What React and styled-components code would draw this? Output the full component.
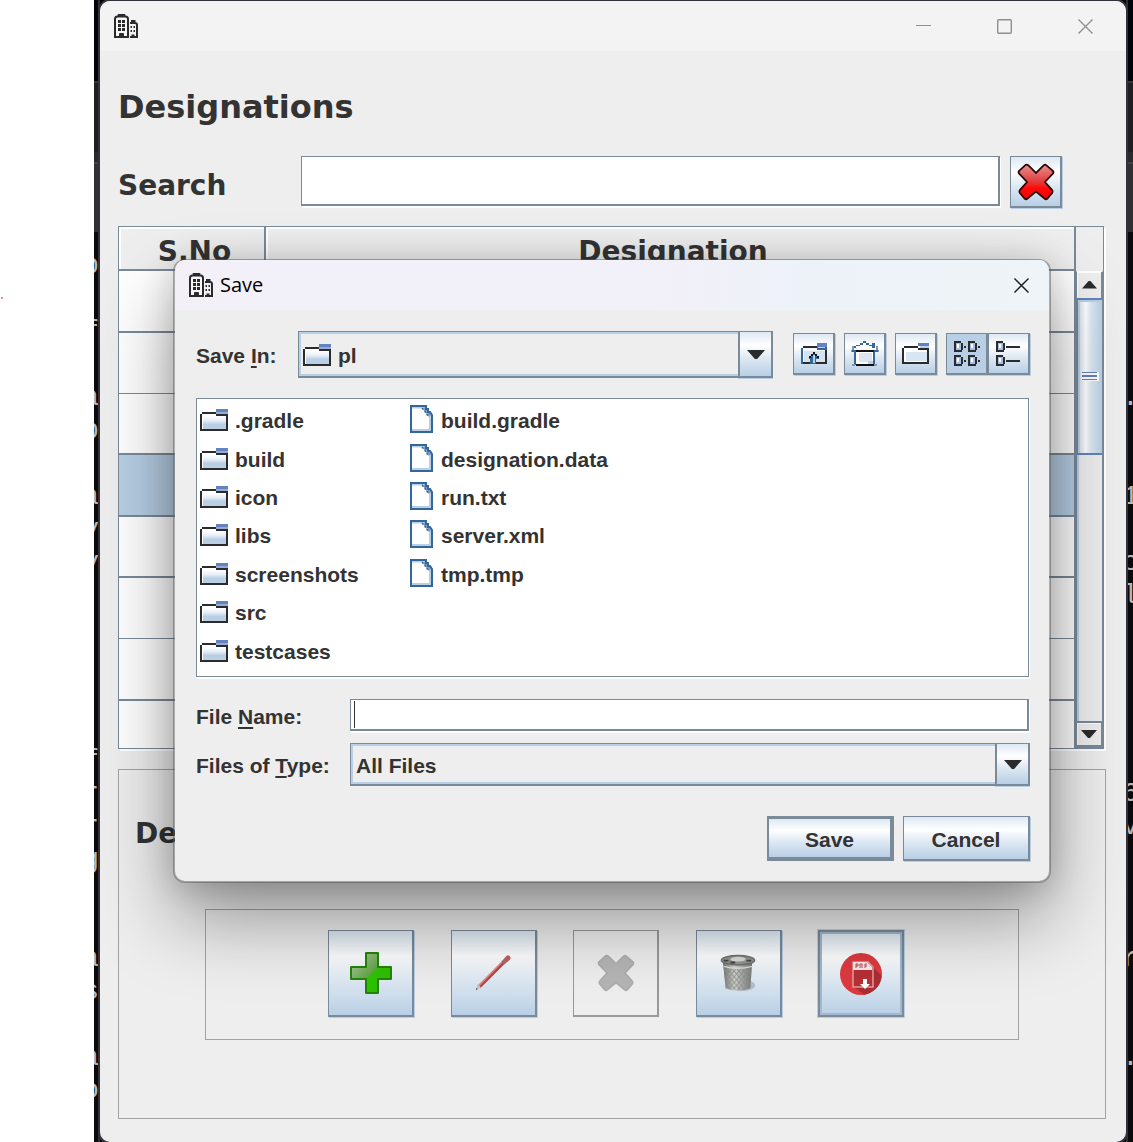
import React from "react";
import styled, { createGlobalStyle, css } from "styled-components";

const steel = "#7a8a99";
const sky = "#b8cfe5";
const ink = "#333333";
const metal = "linear-gradient(180deg, #dde8f3 0%, #ffffff 30%, #dde8f3 60%, #b8cfe5 100%)";

const GlobalStyle = createGlobalStyle`
  * { box-sizing: border-box; }
  body { margin: 0; background: #ffffff; color: ${ink}; }
  button, input, select { font: inherit; color: inherit; margin: 0; border-radius: 0; }
  button { padding: 0; }
  button:focus, input:focus, select:focus { outline: none; }
`;

/* ---------- desktop ---------- */

const Page = styled.div`
  display: grid;
  grid-template-columns: 94px minmax(0, 1fr);
  min-height: 100vh;
`;

const Paper = styled.div`
  background: #ffffff;
  padding: 297px 0 0 1px;
`;

const Speck = styled.div`
  width: 2px;
  height: 2px;
  background: #f08a8a;
`;

const Desktop = styled.div`
  display: grid;
  grid-template-columns: 6px minmax(0, 1fr) 7px;
  background: linear-gradient(
    180deg,
    #01030a 0 81px, #363636 81px 83px, #1f1f1f 83px 152px, #2a2a2a 152px 162px,
    #434343 162px 164px, #303030 164px 232px, #0a0a0a 232px
  );
`;

const Gutter = styled.div`
  display: flex;
  flex-direction: column;
  align-items: ${(p) => (p.$side === "left" ? "flex-end" : "flex-start")};
  min-width: 0;
  overflow: hidden;
  padding: 249px 1px 0 0;
  text-indent: ${(p) => (p.$side === "left" ? "0" : "-4px")};
  background: linear-gradient(#303030, #303030) ${(p) => (p.$side === "left" ? "right" : "left")} / 2px 100% no-repeat;
  font: 28px/33px "Liberation Mono", monospace;
  color: #b8b8b8;
`;

const CodeLine = styled.span`
  height: 33px;
  flex: none;
  white-space: pre;
`;

/* ---------- main window ---------- */

const Window = styled.main`
  position: relative;
  display: flex;
  flex-direction: column;
  margin-top: 1px;
  border-radius: 10px;
  background: #eeeeee;
  box-shadow: 0 0 0 2px #34313a;
  font-family: "DejaVu Sans", Verdana, sans-serif;
  font-weight: 700;
  overflow: hidden;
`;

const TitleBar = styled.header`
  display: flex;
  align-items: center;
  height: 50px;
  padding-left: 14px;
  background: #f3f3f3;
`;

const CaptionButtons = styled.div`
  display: flex;
  margin-left: auto;
`;

const CaptionButton = styled.button`
  display: grid;
  place-items: center;
  width: ${(p) => (p.$narrow ? "56px" : "81px")};
  height: 50px;
  border: 0;
  background: transparent;
  color: ${(p) => (p.$narrow ? "#1b1b1b" : "#8f8f8f")};
`;

const Content = styled.div`
  display: flex;
  flex-direction: column;
  flex: 1;
  padding: 36px 20px 23px 18px;
`;

const Heading = styled.h1`
  margin: 0;
  font-size: 32px;
  line-height: 40px;
`;

const SearchRow = styled.div`
  display: flex;
  align-items: center;
  gap: 10px;
  margin-top: 29px;
  padding-right: 44px;
`;

const BigLabel = styled.label`
  font-size: 28px;
  line-height: 34px;
`;

const SearchLabel = styled(BigLabel)`
  width: 173px;
  padding-top: 8px;
`;

const field = css`
  min-width: 0;
  background-color: #ffffff;
  border: solid ${steel};
  border-width: 1px 2px 2px 1px;
  box-shadow: 1px 2px 0 #ffffff;
`;

const SearchInput = styled.input`
  ${field}
  flex: 1;
  height: 50px;
  margin-bottom: 2px;
  padding: 0 8px;
`;

const MetalButton = styled.button`
  display: grid;
  place-items: center;
  flex: none;
  width: ${(p) => p.$w}px;
  height: ${(p) => p.$h}px;
  border: solid ${(p) => (p.disabled ? "#999999" : steel)};
  border-width: ${(p) => (p.$default ? "3px 4px 4px 2px" : "1px 2px 2px 1px")};
  background: ${(p) => (p.disabled ? "transparent" : p.$pressed ? sky : metal)};
  box-shadow: ${(p) => (p.$default || p.disabled ? "none" : `1px 1px 0 ${sky}`)};
  ${(p) =>
    p.$focused &&
    css`
      border-width: 2px;
      box-shadow: inset 0 0 0 2px #a3b8cc, 0 0 0 1px ${sky};
    `}
`;

/* ---------- table ---------- */

const ScrollPane = styled.section`
  display: grid;
  grid-template-columns: minmax(0, 1fr) 27px;
  height: 523px;
  margin-top: 18px;
  margin-right: 2px;
  border: 1px solid ${steel};
  box-shadow: 2px 2px 0 #ffffff;
`;

const Viewport = styled.div`
  overflow: hidden;
  border-right: 1px solid ${steel};
`;

const Table = styled.table`
  width: 100%;
  border-collapse: separate;
  border-spacing: 0;
  table-layout: fixed;
  font-size: 28px;
  line-height: 34px;

  th {
    height: 44px;
    padding: 8px 0 0 6px;
    border: solid ${steel};
    border-width: 0 2px 2px 0;
    box-shadow: inset 2px 2px 0 #ffffff;
    vertical-align: top;
  }
  th:last-child { border-right-width: 1px; }
  th:first-child { width: 147px; }
`;

const Row = styled.tr`
  height: 61px;
  background: ${(p) => (p.$selected ? sky : "#ffffff")};
  &:nth-child(3n + 1) { height: 62px; }
  td {
    padding: 0;
    border-bottom: 2px solid ${steel};
  }
  td:last-child { border-right: 1px solid ${steel}; }
  &:nth-child(4n + 2) td { border-bottom-width: 1px; }
`;

const ScrollBar = styled.div`
  display: flex;
  flex-direction: column;
  margin-top: 44px;
  border: solid ${steel};
  border-width: 0 1px 1px;
  border-top: 1px solid #ffffff;
`;

const ArrowButton = styled.button`
  display: grid;
  place-items: center;
  height: 26px;
  border: 0;
  border-top: ${(p) => (p.$down ? `2px solid ${steel}` : "0")};
  border-bottom: ${(p) => (p.$down ? `2px solid ${steel}` : "0")};
  border-right: 1px solid ${steel};
  background: #eeeeee;
  box-shadow: inset 1px 1px 0 #ffffff;
`;

const Track = styled.div`
  flex: 1;
  border-left: 2px solid ${sky};
`;

const Thumb = styled.div`
  display: grid;
  place-items: center;
  height: 157px;
  margin-left: -2px;
  border: solid #6382bf;
  border-width: 2px 0 2px 1px;
  background: linear-gradient(90deg, #cfdeec 0%, #ffffff 32%, #dde8f3 55%, #b8cfe5 100%);
  box-shadow: inset 2px 2px 0 ${sky};
`;

const Panel = styled.section`
  flex: 1;
  margin-top: 20px;
  padding: 47px 86px 78px;
  border: 1px solid #a3a3a3;
`;

const PanelLabel = styled.div`
  margin-left: -70px;
  font-size: 28px;
  line-height: 34px;
`;

const ActionBar = styled.div`
  display: flex;
  justify-content: space-between;
  margin-top: 58px;
  padding: 20px 114px 22px 122px;
  border: 1px solid #a3a3a3;
`;

/* ---------- dialog ---------- */

const Dialog = styled.div`
  position: absolute;
  top: 258px;
  left: 73px;
  right: 75px;
  border: solid rgba(90, 90, 90, 0.5);
  border-width: 1px 2px 2px;
  border-radius: 12px;
  background: #eeeeee;
  background-clip: padding-box;
  box-shadow: 0 36px 76px rgba(0, 0, 0, 0.38), 0 2px 32px rgba(0, 0, 0, 0.16);
  font: 700 21px/26px "Liberation Sans", Arial, sans-serif;
  overflow: hidden;
`;

const DialogTitle = styled.header`
  display: flex;
  align-items: center;
  gap: 7px;
  height: 50px;
  padding-left: 14px;
  background: linear-gradient(90deg, #f3f0f8 0%, #f2f0f8 55%, #edf2f9 72%, #eef4f7 100%);
  color: #000000;
  font: 400 20px/28px "Open Sans", "Noto Sans", sans-serif;

  button { margin-left: auto; }
`;

const DialogBody = styled.form`
  padding: 21px 19px 20px 21px;
`;

const FormRow = styled.div`
  display: flex;
  align-items: center;
  margin-top: ${(p) => p.$gap || 0}px;
`;

const FormLabel = styled.label`
  flex: none;
  width: ${(p) => p.$w}px;
  padding-top: 3px;
  white-space: pre;
  u {
    text-decoration-thickness: 2px;
    text-underline-offset: 3px;
    text-decoration-skip-ink: none;
  }
`;

const Combo = styled.div`
  position: relative;
  flex: 1;
  min-width: 0;

  > svg {
    position: absolute;
    left: 5px;
    top: 13px;
  }
`;

const Select = styled.select`
  display: block;
  appearance: none;
  width: 100%;
  height: ${(p) => p.$h}px;
  padding: 4px 40px 0 ${(p) => (p.$icon ? 39 : 5)}px;
  background: #eeeeee;
  border: solid ${steel};
  border-width: 1px 2px 2px 1px;
  box-shadow: inset 0 0 0 2px ${sky};
`;

const ComboArrow = styled.span`
  position: absolute;
  top: 0;
  right: 0;
  bottom: 0;
  display: grid;
  place-items: center;
  width: 35px;
  border: solid ${steel};
  border-width: 1px 2px 2px;
  background: ${metal};
  box-shadow: 0 1px 0 ${sky};
  pointer-events: none;
`;

const Tools = styled.div`
  display: flex;
  gap: 9px;
  margin: 0 0 2px 20px;
`;

const ViewToggle = styled.div`
  display: flex;
`;

const FileList = styled.ul`
  display: grid;
  grid-auto-flow: column;
  grid-template-rows: repeat(7, 1fr);
  grid-template-columns: 210px 1fr;
  height: 279px;
  margin: 20px 1px 0 0;
  padding: 3px 3px 5px;
  list-style: none;
  background: #ffffff;
  border: 1px solid ${steel};
  box-shadow: 1px 2px 0 #ffffff;
`;

const FileItem = styled.li`
  display: flex;
  align-items: center;
  gap: ${(p) => (p.$folder ? 7 : 8)}px;
  svg { flex: none; margin-bottom: ${(p) => (p.$folder ? 2 : 4)}px; }
`;

const NameInput = styled.input`
  ${field}
  flex: 1;
  height: 32px;
  margin-right: 1px;
  padding: 0 5px;
  background-image: linear-gradient(${ink}, ${ink});
  background-size: 1px 27px;
  background-position: 3px 1px;
  background-repeat: no-repeat;
  caret-color: transparent;
`;

const DialogButtons = styled.div`
  display: flex;
  justify-content: flex-end;
  gap: 9px;
  margin-top: 30px;

  button { padding-top: 4px; }
`;

/* ---------- icons ---------- */

const BuildingIcon = () => (
  <svg width="24" height="24" viewBox="0 0 24 24" fill="none" aria-hidden="true">
    <path d="M4.500 1h6" stroke="#2b2b2b" strokeWidth="2" strokeLinecap="round" />
    <path d="M1 23V5Q1 2.500 3.500 2.500h8Q14 2.500 14 5v18z" stroke="#2b2b2b" strokeWidth="2" fill="#f7f7f7" />
    <path d="M17 7h4.500M16 9h5q2 0 2 2v12h-7" stroke="#2b2b2b" strokeWidth="2" />
    <path d="M4 6h3v3H4zm4 0h3v3H8zM4 10h3v3H4zm4 0h3v3H8zM4 14h3v3H4zm4 0h3v3H8zM5 24v-4q0-1 1-1h3q1 0 1 1v4z" fill="#2b2b2b" />
    <path d="M16.500 12H18v2h-1.500zm3 0H21v2h-1.500zm-3 4H18v2h-1.500zm3 0H21v2h-1.500zM17.500 24v-3.500h3V24z" fill="#2b2b2b" />
  </svg>
);

const MinimizeIcon = () => (
  <svg width="16" height="16" stroke="currentColor" fill="none" aria-hidden="true"><path d="M0 7.500h15" /></svg>
);
const MaximizeIcon = () => (
  <svg width="15" height="15" stroke="currentColor" fill="none" strokeWidth="1.400" aria-hidden="true">
    <rect x=".7" y=".7" width="13.600" height="13.600" rx="1" />
  </svg>
);
const CloseIcon = () => (
  <svg width="15" height="15" stroke="currentColor" fill="none" strokeWidth="1.400" aria-hidden="true">
    <path d="M.5.500l14 14M14.500.500l-14 14" />
  </svg>
);

const Triangle = ({ up, size = 16 }) => (
  <svg width={size} height={size / 2} viewBox="0 0 16 8" aria-hidden="true">
    <path d={up ? "M0 8L7 0h2l7 8z" : "M0 0h16L9 8H7z"} fill="#2b2b2b" />
  </svg>
);

const FolderIcon = () => (
  <svg width="28" height="22" shapeRendering="crispEdges" aria-hidden="true">
    <defs>
      <linearGradient id="folderFill" x1="0" y1="0" x2="0" y2="1">
        <stop offset="0" stopColor="#ffffff" />
        <stop offset=".35" stopColor="#e6eef7" />
        <stop offset=".65" stopColor="#b8cfe5" />
      </linearGradient>
    </defs>
    <path d="M2 5h24v15H2z" fill="#ffffff" />
    <path d="M3 7h23v13H3z" fill="url(#folderFill)" />
    <path d="M0 5h2v16H0zM2 3h14v2H2zM16 5h12v2H16zM26 7h2v15h-2zM0 20h28v2H0z" fill="#2b2b2b" />
    <path d="M16 0h12v3H16z" fill="#6382bf" />
    <path d="M16 3h12v2H16z" fill="#94acd6" />
  </svg>
);

const FileIcon = () => (
  <svg width="23" height="28" aria-hidden="true">
    <path d="M1 1h14.500L22 9.500V27H1z" fill="#ffffff" />
    <path d="M2 2.500h13M20 10v15.500M2 25h19" stroke="#b8cfe5" strokeWidth="2" fill="none" />
    <path d="M14 3l6 8" stroke="#7fa0c4" strokeWidth="3" />
    <path d="M1 1h15v3h2v3h2l2 3v17H1z" stroke="#336699" strokeWidth="2" fill="none" />
    <path d="M12 3l3 3 1 3 3 2" stroke="#336699" strokeWidth="1.500" strokeDasharray="2 2" fill="none" />
  </svg>
);

const UpFolderIcon = () => (
  <svg width="26" height="21" shapeRendering="crispEdges" aria-hidden="true">
    <path d="M2 5h22v14H2z" fill="#f4f8fc" />
    <path d="M3 8h21v11H3z" fill="#d5e3f0" />
    <path d="M2 3h14v2H2zM24 6h2v15h-2zM2 19h22v2H2z" fill="#2b2b2b" />
    <path d="M0 5h2v16H0zM16 4h10v3H16z" fill="#336699" />
    <path d="M16 0h10v4H16z" fill="#6382bf" />
    <path d="M17 4h7v1h-7z" fill="#b8cfe5" />
    <path d="M12 11h3v2h3v3h-3v5h-3v-5h0v5h-3v-5H8v-3h4z" fill="#336699" />
    <path d="M12 12h2v8h-2z" fill="#b8cfe5" />
    <path d="M12 9h2v2h-2zM10 11h2v2h-2zM14 11h2v2h-2zM8 13h2v2H8zM16 13h2v2h-2z" fill="#111111" />
  </svg>
);

const HomeIcon = () => (
  <svg width="28" height="25" shapeRendering="crispEdges" aria-hidden="true">
    <path d="M12 2h4l8 7H4zM5 10h18v13H5z" fill="#ffffff" />
    <path d="M8 12h13v9H8z" fill="#dbe5f1" />
    <path d="M17 20h5v3h-5z" fill="#b8cfe5" />
    <path d="M12 0h3v2h-3zM9 2h3v2H9zM15 2h3v2h-3zM5 4h4v1H5zM18 4h3V2h3v5h-3V5h-3zM3 5h2v2H3zM1 9h4v2H1zM23 9h4v2h-4zM3 10h2v14H3zM22 10h2v14h-2z" fill="#336699" />
    <path d="M1 5h2v4H1zM25 5h2v4h-2zM0 9h1v2H0zM27 9h1v2h-1zM1 23h3v2H1zM23 23h3v2h-3z" fill="#8596a8" />
    <path d="M5 9h18v2H5zM5 23h18v2H5z" fill="#111111" />
  </svg>
);

const NewFolderIcon = () => (
  <svg width="27" height="21" shapeRendering="crispEdges" aria-hidden="true">
    <path d="M2 5h23v14H2z" fill="#ffffff" />
    <path d="M4 9h21v9H4z" fill="#d8e5f2" />
    <path d="M0 5h2v16H0zM2 3h14v2H2zM16 5h11v2H16zM25 7h2v14h-2zM0 19h27v2H0z" fill="#2b2b2b" />
    <path d="M16 0h11v3H16z" fill="#6382bf" />
    <path d="M18 3h9v2h-9z" fill="#b8cfe5" />
  </svg>
);

const MiniFile = ({ x, y }) => (
  <g transform={`translate(${x} ${y})`}>
    <path d="M2 2h5v7H2z" fill="#a3c0e4" />
    <path d="M3 3h2v4H3z" fill="#ffffff" />
    <path d="M0 0h7v2H0zM0 2h2v8H0zM7 2h2v7H7zM0 9h8v2H0z" fill="#2b2b2b" />
  </g>
);

const GridViewIcon = () => (
  <svg width="26" height="25" shapeRendering="crispEdges" aria-hidden="true">
    <MiniFile x={0} y={0} /><MiniFile x={14} y={0} /><MiniFile x={0} y={14} /><MiniFile x={14} y={14} />
    <path d="M10 5h2v2h-2zM24 5h2v2h-2zM10 19h2v2h-2zM24 19h2v2h-2z" fill="#2b2b2b" />
  </svg>
);

const DetailsViewIcon = () => (
  <svg width="25" height="25" shapeRendering="crispEdges" aria-hidden="true">
    <MiniFile x={0} y={0} /><MiniFile x={0} y={14} />
    <path d="M10 5h14v2H10zM10 19h14v2H10z" fill="#2b2b2b" />
  </svg>
);

const CrossIcon = ({ muted }) => (
  <svg width="38" height="38" viewBox="0 0 40 40" aria-hidden="true">
    <defs>
      <linearGradient id="crossRed" x1="0" y1="0" x2="0" y2="1">
        <stop offset="0" stopColor="#e89090" />
        <stop offset=".5" stopColor="#e23a3a" />
        <stop offset=".68" stopColor="#ff0808" />
        <stop offset="1" stopColor="#f00000" />
      </linearGradient>
    </defs>
    <path
      d="M9 2Q10.500 1 12 2.500L20 10.500 28 2.500Q29.500 1 31 2.500L38 8.500Q39 10 37.500 11.500L29.500 20 37 28.500Q38 30 37 31.500L32 37.500Q30.500 39 29 37.500L20 30 11 37.500Q9.500 39 8 37.500L3 31.500Q2 30 3 28.500L10.500 20 2.500 11.500Q1 10 2 8.500z"
      fill={muted ? "#b5b5b5" : "url(#crossRed)"}
      stroke={muted ? "#adadad" : "#2a0505"}
      strokeWidth="1.800"
    />
  </svg>
);

const PlusIcon = () => (
  <svg width="42" height="42" viewBox="0 0 42 42" aria-hidden="true">
    <defs>
      <linearGradient id="plusGloss" x1="0" y1="0" x2="1" y2="1">
        <stop offset="0" stopColor="#bcd0b0" />
        <stop offset=".5" stopColor="#62a648" />
        <stop offset=".54" stopColor="#30c400" />
        <stop offset="1" stopColor="#2cb800" />
      </linearGradient>
    </defs>
    <path d="M16 1h12v14h13v12H28v14H16V27H1V15h15z" fill="url(#plusGloss)" stroke="#258308" strokeWidth="2" strokeLinejoin="round" />
  </svg>
);

const PencilIcon = () => (
  <svg width="36" height="36" viewBox="0 0 36 36" aria-hidden="true">
    <path d="M4 32L32 4" stroke="#b8443e" strokeWidth="3.600" />
    <path d="M3.500 31L30 4" stroke="#e08a86" strokeWidth="1.600" />
    <path d="M28 8l3-3" stroke="#7c7c84" strokeWidth="4" />
    <path d="M31.500 4.500l1.500-1.500" stroke="#c5605c" strokeWidth="5" strokeLinecap="round" />
    <path d="M2.500 29l3.500 3.500L1 35z" fill="#c9c5c2" />
    <path d="M1 33l2 1-2 1z" fill="#555555" />
  </svg>
);

const TrashIcon = () => (
  <svg width="38" height="38" viewBox="0 0 38 40" aria-hidden="true">
    <defs>
      <linearGradient id="binBody" x1="0" y1="0" x2="1" y2="0">
        <stop offset="0" stopColor="#6b6d6a" />
        <stop offset=".4" stopColor="#d0d3ce" />
        <stop offset="1" stopColor="#707370" />
      </linearGradient>
      <pattern id="binMesh" width="5" height="6" patternUnits="userSpaceOnUse">
        <path d="M0 0l5 6M5 0L0 6" stroke="#8b8e8a" strokeWidth="1" />
      </pattern>
    </defs>
    <ellipse cx="23" cy="33" rx="14" ry="6" fill="#8593a3" opacity=".45" />
    <path d="M3 8l3 28q12 6 26 0l2-28z" fill="url(#binBody)" />
    <path d="M4 15l2 20q12 6 26 0l1-20z" fill="url(#binMesh)" />
    <path d="M4 13q14 4 30 0" stroke="#dcdeda" strokeWidth="1.500" fill="none" />
    <ellipse cx="19" cy="6.500" rx="17.500" ry="5" fill="#8f928e" stroke="#6e706d" strokeWidth="1.500" />
    <ellipse cx="19" cy="5.500" rx="8" ry="2.500" fill="#d5d7d3" />
    <path d="M4 7h5M28 7h5M11 9h5" stroke="#444644" strokeWidth="2" />
  </svg>
);

const PdfIcon = () => (
  <svg width="42" height="42" viewBox="0 0 42 42" aria-hidden="true">
    <circle cx="21" cy="21" r="21" fill="#dc3a40" />
    <path d="M33 14l8.500 9Q40 38 24 41.800L13 33z" fill="#aa2d32" />
    <path d="M13 9h15l5 5v20H13z" fill="#b53035" stroke="#e99a9d" strokeWidth="1.500" />
    <path d="M13 9h14l5 5v3H13z" fill="#f8e9ea" />
    <path d="M16 15v-4h2v2h-2M20 11v4M20 11h2v4M25 15v-4h2M25 13h2" stroke="#b84a50" fill="none" />
    <path d="M23 26h4v5h3l-5 5-5-5h3z" fill="#ffffff" />
  </svg>
);

/* ---------- data ---------- */

const leftCode = ["p", "", "f", "", "a", "b", "", "a", "y", "y", "", "", "", "", "", "f", "r", "r", "g", "", "", "a", "s", "", "a", "o"];
const rightCode = ["", "", "", "", ".", "", "", "1", "", "c", "l", "", "", "", "", "", "6", "v", "", "", "", "r", "", "", "."];
const folders = [".gradle", "build", "icon", "libs", "screenshots", "src", "testcases"];
const files = ["build.gradle", "designation.data", "run.txt", "server.xml", "tmp.tmp"];
const rows = [1, 2, 3, 4, 5, 6, 7, 8];

const CodeGutter = ({ side, lines }) => (
  <Gutter $side={side} aria-hidden="true">
    {lines.map((text, i) => <CodeLine key={i}>{text}</CodeLine>)}
  </Gutter>
);

const SaveDialog = () => (
  <Dialog role="dialog" aria-label="Save">
    <DialogTitle>
      <BuildingIcon />
      Save
      <CaptionButton $narrow aria-label="Close dialog"><CloseIcon /></CaptionButton>
    </DialogTitle>
    <DialogBody onSubmit={(e) => e.preventDefault()}>
      <FormRow>
        <FormLabel $w={102} htmlFor="folder">Save <u>I</u>n:</FormLabel>
        <Combo>
          <Select id="folder" $h={47} $icon><option>pl</option></Select>
          <FolderIcon />
          <ComboArrow><Triangle size={18} /></ComboArrow>
        </Combo>
        <Tools>
          <MetalButton type="button" $w={42} $h={42} aria-label="Up one level"><UpFolderIcon /></MetalButton>
          <MetalButton type="button" $w={42} $h={42} aria-label="Home"><HomeIcon /></MetalButton>
          <MetalButton type="button" $w={42} $h={42} aria-label="Create new folder"><NewFolderIcon /></MetalButton>
          <ViewToggle>
            <MetalButton type="button" $w={42} $h={42} $pressed aria-pressed="true" aria-label="List"><GridViewIcon /></MetalButton>
            <MetalButton type="button" $w={42} $h={42} aria-pressed="false" aria-label="Details"><DetailsViewIcon /></MetalButton>
          </ViewToggle>
        </Tools>
      </FormRow>
      <FileList>
        {folders.map((name) => <FileItem key={name} $folder><FolderIcon />{name}</FileItem>)}
        {files.map((name) => <FileItem key={name}><FileIcon />{name}</FileItem>)}
      </FileList>
      <FormRow $gap={22}>
        <FormLabel $w={154} htmlFor="fileName">File <u>N</u>ame:</FormLabel>
        <NameInput id="fileName" type="text" />
      </FormRow>
      <FormRow $gap={12}>
        <FormLabel $w={154} htmlFor="fileType">Files of <u>T</u>ype:</FormLabel>
        <Combo>
          <Select id="fileType" $h={43}><option>All Files</option></Select>
          <ComboArrow><Triangle size={18} /></ComboArrow>
        </Combo>
      </FormRow>
      <DialogButtons>
        <MetalButton type="submit" $w={127} $h={45} $default>Save</MetalButton>
        <MetalButton type="button" $w={127} $h={45}>Cancel</MetalButton>
      </DialogButtons>
    </DialogBody>
  </Dialog>
);

export default function App() {
  return (
    <>
      <GlobalStyle />
      <Page>
        <Paper><Speck /></Paper>
        <Desktop>
          <CodeGutter side="left" lines={leftCode} />
          <Window>
            <TitleBar>
              <BuildingIcon />
              <CaptionButtons>
                <CaptionButton aria-label="Minimize"><MinimizeIcon /></CaptionButton>
                <CaptionButton aria-label="Maximize"><MaximizeIcon /></CaptionButton>
                <CaptionButton aria-label="Close"><CloseIcon /></CaptionButton>
              </CaptionButtons>
            </TitleBar>
            <Content>
              <Heading>Designations</Heading>
              <SearchRow>
                <SearchLabel htmlFor="search">Search</SearchLabel>
                <SearchInput id="search" type="text" />
                <MetalButton $w={52} $h={52} aria-label="Clear search"><CrossIcon /></MetalButton>
              </SearchRow>
              <ScrollPane>
                <Viewport>
                  <Table>
                    <thead>
                      <tr><th>S.No</th><th>Designation</th></tr>
                    </thead>
                    <tbody>
                      {rows.map((n) => <Row key={n} $selected={n === 4}><td /><td /></Row>)}
                    </tbody>
                  </Table>
                </Viewport>
                <ScrollBar>
                  <ArrowButton aria-label="Scroll up"><Triangle up size={15} /></ArrowButton>
                  <Track>
                    <Thumb>
                      <svg width="17" height="9" shapeRendering="crispEdges" aria-hidden="true">
                        <path d="M0 0h17v9H0z" fill="#ffffff" />
                        <path d="M0 0h15v1H0zM0 3h15v2H0zM0 7h15v1H0z" fill="#6382bf" />
                      </svg>
                    </Thumb>
                  </Track>
                  <ArrowButton $down aria-label="Scroll down"><Triangle size={16} /></ArrowButton>
                </ScrollBar>
              </ScrollPane>
              <Panel>
                <PanelLabel>Designation</PanelLabel>
                <ActionBar>
                  <MetalButton $w={86} $h={87} aria-label="Add"><PlusIcon /></MetalButton>
                  <MetalButton $w={86} $h={87} aria-label="Edit"><PencilIcon /></MetalButton>
                  <MetalButton $w={86} $h={87} disabled aria-label="Cancel edit"><CrossIcon muted /></MetalButton>
                  <MetalButton $w={86} $h={87} aria-label="Delete"><TrashIcon /></MetalButton>
                  <MetalButton $w={86} $h={87} $focused aria-label="Export to PDF"><PdfIcon /></MetalButton>
                </ActionBar>
              </Panel>
            </Content>
            <SaveDialog />
          </Window>
          <CodeGutter side="right" lines={rightCode} />
        </Desktop>
      </Page>
    </>
  );
}
